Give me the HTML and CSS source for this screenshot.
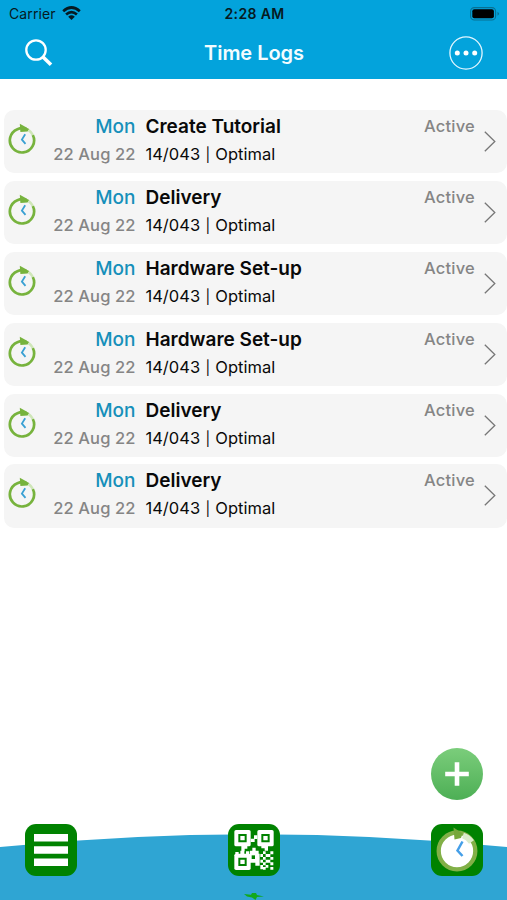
FILE: index.html
```html
<!DOCTYPE html>
<html lang="en">
<head>
<meta charset="utf-8">
<title>Time Logs</title>
<link rel="stylesheet" href="styles.css">
</head>
<body>
<svg width="0" height="0" class="defs" aria-hidden="true">
  <symbol id="clock" viewBox="0 0 28 32">
    <path d="M20.5 7.2A12.1 12.1 0 1 0 24.8 12" fill="none" stroke="#77b33d" stroke-width="2.7"/>
    <path d="M20.5 7.2A12.1 12.1 0 0 1 24.8 12" fill="none" stroke="#cfe6b8" stroke-width="2.7"/>
    <path d="M11.8 .8 18.6 4.6 19.6 8.4 12.4 9Z" fill="#77b33d"/>
    <path d="M17.2 11.2 13.9 16.600l3.600 4.200" fill="none" stroke="#39a0d3" stroke-width="1.800"/>
  </symbol>
  <symbol id="chevron" viewBox="0 0 12 21"><path d="M.8.8 10.8 10.5.8 20.2" fill="none" stroke="#777" stroke-width="1.3"/></symbol>
</svg>
<header class="top">
  <div class="status">
    <span class="carrier"><span class="carrier-name">Carrier</span>
      <svg width="19" height="15" viewBox="0 0 19 15"><g fill="none" stroke="#061a22" stroke-width="2.7"><path d="M1.2 5.2Q9.5-2.2 17.8 5.2"/><path d="M4.1 8.5Q9.5 3.7 14.9 8.5"/></g><path d="M6.2 10.7Q9.5 8 12.8 10.7L9.5 14Z" fill="#061a22"/></svg>
    </span>
    <span class="time">2:28 AM</span>
    <svg class="battery" width="30" height="14" viewBox="0 0 30 14"><rect x=".6" y=".6" width="25" height="12.4" rx="3.8" fill="none" stroke="#087092" stroke-width="1.1"/><rect x="2.3" y="2.3" width="21.6" height="9" rx="2" fill="#000"/><path d="M27.5 4.8Q30.5 6.8 27.5 8.8Z" fill="#087092"/></svg>
  </div>
  <div class="nav">
    <svg width="28" height="28" viewBox="0 0 28 28" fill="none" stroke="#fff"><circle cx="11" cy="11" r="9.7" stroke-width="2.3"/><path d="M18 18l8 7.8" stroke-width="3.6"/></svg>
    <h1>Time Logs</h1>
    <svg width="34" height="34" viewBox="0 0 34 34"><circle cx="17" cy="17" r="16.1" fill="none" stroke="#e2f6ff" stroke-width="1.3"/><g fill="#fff"><circle cx="8.3" cy="17" r="2.5"/><circle cx="17" cy="17" r="2.5"/><circle cx="25.7" cy="17" r="2.5"/></g></svg>
  </div>
</header>
<main>
  <ul class="logs">
    <li><svg class="clock"><use href="#clock"/></svg><div class="date"><b>Mon</b><span>22 Aug 22</span></div><div class="task"><b>Create Tutorial</b><span>14/043 <i>|</i> Optimal</span></div><span class="state">Active</span><svg class="chev"><use href="#chevron"/></svg></li>
    <li><svg class="clock"><use href="#clock"/></svg><div class="date"><b>Mon</b><span>22 Aug 22</span></div><div class="task"><b>Delivery</b><span>14/043 <i>|</i> Optimal</span></div><span class="state">Active</span><svg class="chev"><use href="#chevron"/></svg></li>
    <li><svg class="clock"><use href="#clock"/></svg><div class="date"><b>Mon</b><span>22 Aug 22</span></div><div class="task"><b>Hardware Set-up</b><span>14/043 <i>|</i> Optimal</span></div><span class="state">Active</span><svg class="chev"><use href="#chevron"/></svg></li>
    <li><svg class="clock"><use href="#clock"/></svg><div class="date"><b>Mon</b><span>22 Aug 22</span></div><div class="task"><b>Hardware Set-up</b><span>14/043 <i>|</i> Optimal</span></div><span class="state">Active</span><svg class="chev"><use href="#chevron"/></svg></li>
    <li><svg class="clock"><use href="#clock"/></svg><div class="date"><b>Mon</b><span>22 Aug 22</span></div><div class="task"><b>Delivery</b><span>14/043 <i>|</i> Optimal</span></div><span class="state">Active</span><svg class="chev"><use href="#chevron"/></svg></li>
    <li><svg class="clock"><use href="#clock"/></svg><div class="date"><b>Mon</b><span>22 Aug 22</span></div><div class="task"><b>Delivery</b><span>14/043 <i>|</i> Optimal</span></div><span class="state">Active</span><svg class="chev"><use href="#chevron"/></svg></li>
  </ul>
  <div class="fab"><svg width="24" height="24" viewBox="0 0 24 24"><path d="M12 .2v23.6M.2 12h23.6" stroke="#fff" stroke-width="4.6"/></svg></div>
</main>
<footer class="dock">
  <svg class="wave" viewBox="0 0 507 66" preserveAspectRatio="none"><path d="M0 13Q253.500-12.400 507 13V66H0Z" fill="#2fa5d3"/></svg>
  <div class="tile"><svg viewBox="0 0 52 52"><path d="M9 10h34v7.500H9zM9 22.300h34v7.500H9zM9 34.500h34v7.500H9z" fill="#fff"/></svg></div>
  <div class="tile"><svg viewBox="0 0 156 156">
    <g fill="#fff"><rect x="19" y="18" width="49" height="49" rx="5"/><rect x="88" y="18" width="49" height="49" rx="5"/><rect x="19" y="89" width="49" height="49" rx="5"/>
    <path d="M78 34h10v11H78zM68 44h12v10H68zM40 66h18v8h-8v8H40zM100 66h20v14h-10v-7h-10zM22 84h10v6H22zM37 80h12v10H37zM54 82h10v8H54zM73 71h10v9h9v9h3v36H82v-9H66V80h7z"/>
    <path d="M105 82h8v8h-8zM127 82h9v9h-9zM97 90h8v9h-8zM113 90h14v9h-14zM105 99h8v8h-8zM127 99h9v8h-9zM97 107h8v9h-8zM113 107h14v9h-14zM105 115h8v9h-8zM127 115h9v9h-9zM97 123h8v13h-8zM113 123h8v8h-8zM105 129h8v8h-8zM127 129h9v8h-9z"/></g>
    <g fill="none" stroke="#008200" stroke-width="6"><path d="M34 33h19v19H34zM103 33h19v19h-19zM34 104h19v19H34z"/></g><path d="M71 94h10v11H71z" fill="#008200"/>
  </svg></div>
  <div class="tile"><svg viewBox="0 0 52 52"><circle cx="26" cy="27" r="17" fill="#fff"/><circle cx="26" cy="27" r="18.300" fill="none" stroke="#82b047" stroke-width="4.300"/><path d="M32 11.500Q37 13 40.500 18" fill="none" stroke="#dcebcb" stroke-width="6"/><path d="M22.500 3.500 31.500 9.500 30 14 23.500 15.500Z" fill="#76a83b"/><path d="M31.500 17.500 26.500 26.500l5 5.500" fill="none" stroke="#459fe8" stroke-width="2.500"/></svg></div>
  <svg class="bolt" width="22" height="8" viewBox="0 0 22 8"><path d="M1 2 8 2.800 9 1 13 1 14 3l7 1.500-7 .5-1.500 3L9 5.500 4 4.500Z" fill="#12a91c"/></svg>
</footer>
</body>
</html>
```
FILE: styles.css
```css
* { box-sizing: border-box; }
body { margin: 0; height: 900px; overflow: hidden; display: flex; flex-direction: column; background: #fff; font-family: Inter, "Liberation Sans", sans-serif; color: #090909; }
svg { display: block; }
.defs { position: absolute; }
.top { height: 79px; background: #03a3dc; flex: none; }
.status { height: 27px; display: grid; grid-template-columns: 1fr auto 1fr; align-items: center; padding: 0 7px 0 9px; font-size: 14px; color: #061a22; }
.carrier { display: flex; align-items: center; gap: 6px; }
.carrier-name { letter-spacing: .1px; }
.time { font-weight: 600; letter-spacing: .35px; }
.battery { justify-self: end; }
.nav { height: 50px; display: grid; grid-template-columns: 34px 1fr 34px; align-items: center; padding: 1px 24px 0 25px; }
h1 { margin: 0; text-align: center; font-size: 20px; line-height: 24px; font-weight: 600; color: #f3fcff; letter-spacing: -.05px; }
main { flex: 1; display: flex; flex-direction: column; justify-content: space-between; padding: 31px 0 24px 4px; }
.logs { margin: 0; padding: 0; list-style: none; display: grid; gap: 7.6px; }
.logs li { height: 63.3px; border-radius: 10px; background: #f5f5f5; display: grid; grid-template-columns: 35px 96.5px 1fr auto 32px; }
.clock { width: 28px; height: 32px; margin: 13px 0 0 4px; }
.date, .task { display: flex; flex-direction: column; padding-top: 4px; white-space: nowrap; }
.date { text-align: right; color: #858585; font-weight: 500; }
.date b { color: #168fba; font-weight: 500; }
.task { padding-left: 10px; }
.logs b { font-size: 19px; line-height: 26px; }
.task b { font-weight: 600; }
.logs span { font-size: 16.5px; line-height: 28px; }
.logs .date span { letter-spacing: .1px; }
.logs i { display: inline-block; width: 6px; font-style: normal; font-size: 14px; line-height: 14px; text-align: center; }
.logs .state { color: #858585; font-weight: 500; padding-top: 2px; letter-spacing: .2px; }
.chev { width: 12px; height: 21px; margin: 21px 0 0 9px; }
.fab { width: 52px; height: 52px; border-radius: 50%; margin-right: 24px; align-self: flex-end; background: linear-gradient(#7bcd7b, #4daf55); display: grid; place-items: center; }
.dock { height: 76px; flex: none; position: relative; display: flex; justify-content: space-between; padding: 0 24px 0 25px; }
.wave { position: absolute; left: 0; bottom: 0; width: 507px; height: 66px; }
.tile { position: relative; width: 52px; height: 52px; border-radius: 11px; background: #008200; }
.bolt { position: absolute; left: 243px; bottom: 0; }
```
